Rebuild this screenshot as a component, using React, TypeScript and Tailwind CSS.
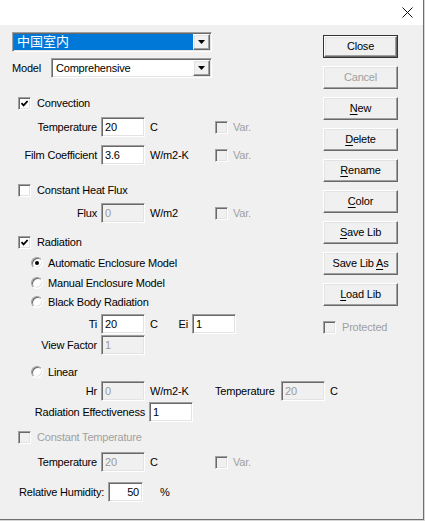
import type { ReactNode } from 'react';

const sunken =
  'border border-t-[#a0a0a0] border-l-[#a0a0a0] border-b-white border-r-white shadow-[inset_1px_1px_0_#696969,inset_-1px_-1px_0_#e3e3e3]';
const raised =
  'border border-t-white border-l-white border-b-[#696969] border-r-[#696969] shadow-[inset_-1px_-1px_0_#a0a0a0,inset_1px_1px_0_#e3e3e3]';

function Check({ checked, disabled }: { checked?: boolean; disabled?: boolean }) {
  return (
    <span
      className={`flex h-[13px] w-[13px] shrink-0 items-center justify-center ${sunken} ${
        disabled ? 'bg-[#f0f0f0]' : 'bg-white'
      }`}
    >
      {checked && (
        <svg width="9" height="9" viewBox="0 0 9 9">
          <path d="M1.5 4.2 L3.6 6.4 L7.6 2" stroke="#000" strokeWidth="1.8" fill="none" />
        </svg>
      )}
    </span>
  );
}

function Radio({ on }: { on?: boolean }) {
  return (
    <span className="flex h-[12px] w-[12px] shrink-0 items-center justify-center rounded-full border border-t-[#a0a0a0] border-l-[#a0a0a0] border-b-white border-r-white bg-white shadow-[inset_1px_1px_0_#696969,inset_-1px_-1px_0_#e3e3e3]">
      {on && <span className="h-[4px] w-[4px] rounded-full bg-black" />}
    </span>
  );
}

function Field({
  value,
  disabled,
  className = 'w-[44px]',
  right,
}: {
  value: string;
  disabled?: boolean;
  className?: string;
  right?: boolean;
}) {
  return (
    <div
      className={`flex h-[20px] shrink-0 items-center px-[3px] ${sunken} ${className} ${
        disabled ? 'bg-[#f0f0f0] text-[#9a9a9a]' : 'bg-white'
      } ${right ? 'justify-end' : ''}`}
    >
      {value}
    </div>
  );
}

function Arrow() {
  return (
    <div className={`flex h-full w-[17px] shrink-0 items-center justify-center bg-[#f0f0f0] ${raised}`}>
      <svg width="7" height="4" viewBox="0 0 7 4">
        <polygon points="0,0 7,0 3.5,4" fill="#000" />
      </svg>
    </div>
  );
}

function CheckRow({ label, checked, disabled }: { label: string; checked?: boolean; disabled?: boolean }) {
  return (
    <div className="ml-[6px] flex items-center gap-[6px]">
      <Check checked={checked} disabled={disabled} />
      <span className={disabled ? 'text-[#a0a0a0]' : ''}>{label}</span>
    </div>
  );
}

function Var() {
  return (
    <div className="flex items-center gap-[5px] text-[#a0a0a0]">
      <Check disabled />
      <span>Var.</span>
    </div>
  );
}

function Label({ children }: { children: ReactNode }) {
  return <span className="w-[89px] shrink-0 pr-[4px] text-right">{children}</span>;
}

function Unit({ children }: { children: ReactNode }) {
  return <span className="w-[70px] shrink-0 pl-[5px]">{children}</span>;
}

function Btn({ children, disabled, primary }: { children: ReactNode; disabled?: boolean; primary?: boolean }) {
  const inner = (
    <div
      className={`flex h-full w-full items-center justify-center bg-[#f0f0f0] ${raised} ${
        disabled ? 'text-[#a0a0a0]' : ''
      }`}
    >
      <span>{children}</span>
    </div>
  );
  if (primary) {
    return <div className="h-[23px] w-[75px] border border-[#333]">{inner}</div>;
  }
  return <div className="h-[23px] w-[75px]">{inner}</div>;
}

function U({ children }: { children: ReactNode }) {
  return <span className="underline underline-offset-[2px]">{children}</span>;
}

export default function App() {
  return (
    <div className="h-[521px] w-[425px] bg-[#d6d6d6] font-['Liberation_Sans','Noto_Sans_CJK_SC',sans-serif] text-[11px] tracking-[-0.2px] text-black">
      <div className="flex h-[520px] w-[424px] flex-col border-r border-b border-[#6e6e6e] bg-[#f0f0f0]">
        <div className="flex h-[25px] shrink-0 items-center justify-end bg-white pr-[10px]">
          <svg width="11" height="11" viewBox="0 0 11 11">
            <path d="M0.5 0.5 L10.5 10.5 M10.5 0.5 L0.5 10.5" stroke="#111" strokeWidth="1" />
          </svg>
        </div>

        <div className="flex flex-1">
          <div className="flex w-[323px] flex-col pl-[12px] pt-[7px]">
            <div className={`flex h-[20px] w-[200px] items-center bg-white p-[1px] ${sunken}`}>
              <div className="flex h-full flex-1 items-center bg-[#0078d7] pl-[3px] text-[13px] tracking-normal text-white">
                中国室内
              </div>
              <Arrow />
            </div>

            <div className="mt-[6px] flex h-[20px] items-center">
              <span className="w-[39px] shrink-0">Model</span>
              <div className={`flex h-[20px] w-[161px] items-center bg-white p-[1px] ${sunken}`}>
                <div className="flex-1 pl-[3px]">Comprehensive</div>
                <Arrow />
              </div>
            </div>

            <div className="mt-[18px] flex h-[14px] items-center">
              <CheckRow label="Convection" checked />
            </div>

            <div className="mt-[7px] flex h-[20px] items-center">
              <Label>Temperature</Label>
              <Field value="20" />
              <Unit>C</Unit>
              <Var />
            </div>

            <div className="mt-[8px] flex h-[20px] items-center">
              <Label>Film Coefficient</Label>
              <Field value="3.6" />
              <Unit>W/m2-K</Unit>
              <Var />
            </div>

            <div className="mt-[18px] flex h-[14px] items-center">
              <CheckRow label="Constant Heat Flux" />
            </div>

            <div className="mt-[6px] flex h-[20px] items-center">
              <Label>Flux</Label>
              <Field value="0" disabled />
              <Unit>W/m2</Unit>
              <Var />
            </div>

            <div className="mt-[12px] flex h-[14px] items-center">
              <CheckRow label="Radiation" checked />
            </div>

            <div className="ml-[19px] mt-[7px] flex h-[14px] items-center gap-[5px]">
              <Radio on />
              <span>Automatic Enclosure Model</span>
            </div>
            <div className="ml-[19px] mt-[6px] flex h-[14px] items-center gap-[5px]">
              <Radio />
              <span>Manual Enclosure Model</span>
            </div>
            <div className="ml-[19px] mt-[5px] flex h-[14px] items-center gap-[5px]">
              <Radio />
              <span>Black Body Radiation</span>
            </div>

            <div className="mt-[5px] flex h-[20px] items-center">
              <Label>Ti</Label>
              <Field value="20" />
              <span className="w-[26px] shrink-0 pl-[5px]">C</span>
              <span className="w-[21px] shrink-0 pr-[4px] text-right">Ei</span>
              <Field value="1" />
            </div>

            <div className="mt-[1px] flex h-[20px] items-center">
              <Label>View Factor</Label>
              <Field value="1" disabled />
            </div>

            <div className="ml-[19px] mt-[10px] flex h-[14px] items-center gap-[5px]">
              <Radio />
              <span>Linear</span>
            </div>

            <div className="mt-[2px] flex h-[20px] items-center">
              <Label>Hr</Label>
              <Field value="0" disabled />
              <Unit>W/m2-K</Unit>
              <span className="w-[66px] shrink-0">Temperature</span>
              <Field value="20" disabled />
              <span className="pl-[5px]">C</span>
            </div>

            <div className="mt-[1px] flex h-[20px] items-center">
              <span className="w-[137px] shrink-0 pr-[4px] text-right">Radiation Effectiveness</span>
              <Field value="1" />
            </div>

            <div className="mt-[8px] flex h-[14px] items-center">
              <CheckRow label="Constant Temperature" disabled />
            </div>

            <div className="mt-[8px] flex h-[20px] items-center">
              <Label>Temperature</Label>
              <Field value="20" disabled />
              <Unit>C</Unit>
              <Var />
            </div>

            <div className="mt-[10px] flex h-[20px] items-center">
              <span className="w-[96px] shrink-0 pl-[7px]">Relative Humidity:</span>
              <Field value="50" className="w-[35px]" right />
              <span className="pl-[17px]">%</span>
            </div>
          </div>

          <div className="flex w-[75px] flex-col gap-[8px] pt-[10px]">
            <Btn primary>Close</Btn>
            <Btn disabled>Cancel</Btn>
            <Btn>
              <U>N</U>ew
            </Btn>
            <Btn>
              <U>D</U>elete
            </Btn>
            <Btn>
              <U>R</U>ename
            </Btn>
            <Btn>
              <U>C</U>olor
            </Btn>
            <Btn>
              <U>S</U>ave Lib
            </Btn>
            <Btn>
              Save Lib <U>A</U>s
            </Btn>
            <Btn>
              <U>L</U>oad Lib
            </Btn>
            <div className="mt-[5px] flex items-center gap-[6px] text-[#a0a0a0]">
              <Check disabled />
              <span>Protected</span>
            </div>
          </div>
        </div>
      </div>
    </div>
  );
}
